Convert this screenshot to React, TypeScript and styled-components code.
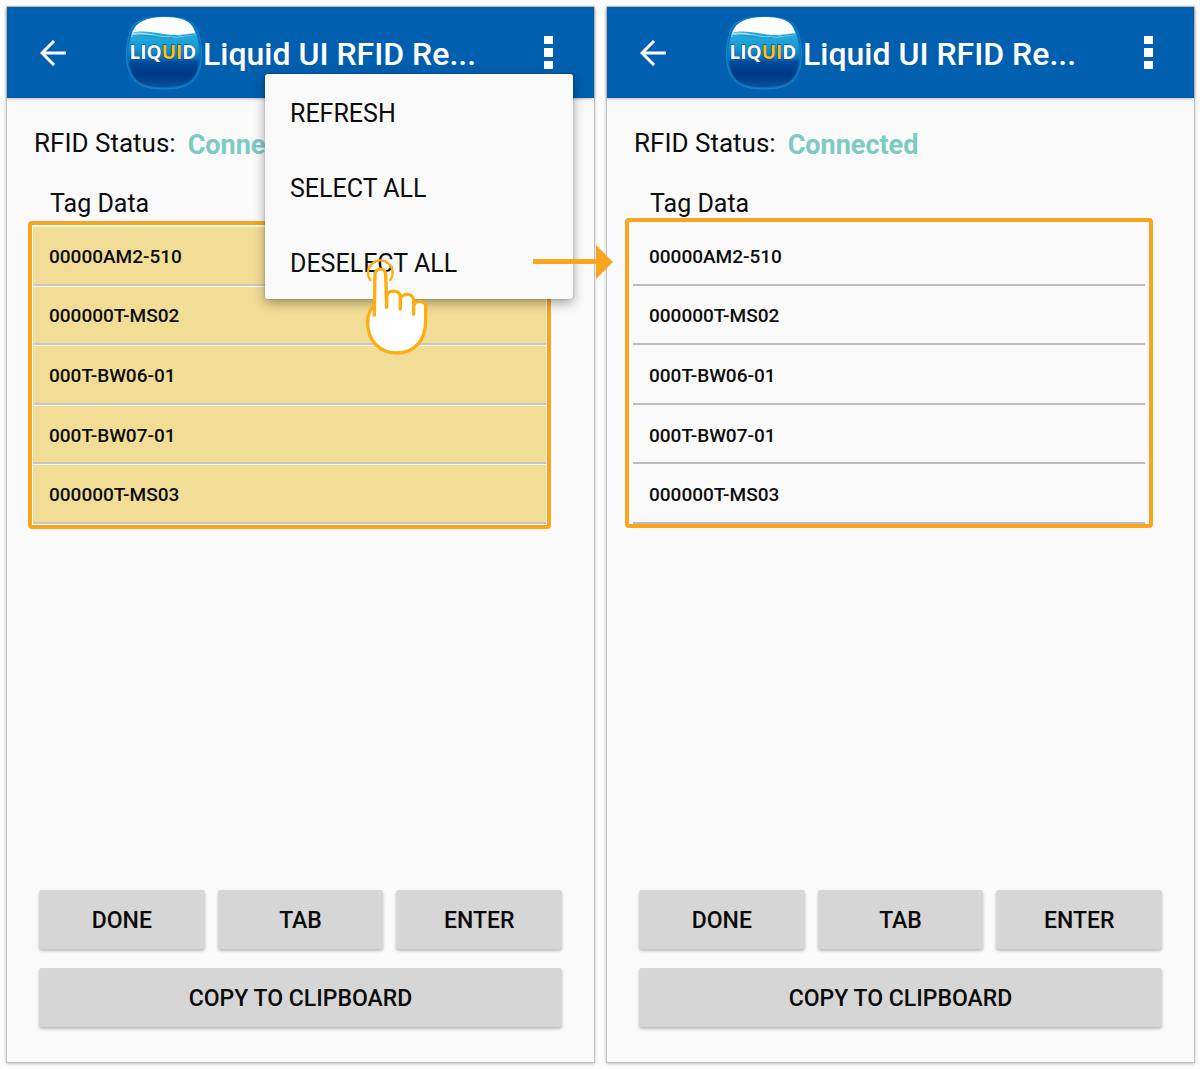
import React from "react";
import styled, { createGlobalStyle } from "styled-components";

const GlobalStyle = createGlobalStyle`
  *, *::before, *::after { box-sizing: border-box; }
  body {
    margin: 0;
    background: #fdfdfd;
    color: #0c0c0c;
    font-family: Roboto, "Liberation Sans", sans-serif;
  }
  button { font: inherit; color: inherit; border: 0; padding: 0; cursor: pointer; }
`;

const Page = styled.main`
  display: grid;
  grid-template-columns: 1fr 1fr;
  gap: 13px;
  min-height: 100vh;
  padding: 7px 6px 7px 7px;
`;

const Screen = styled.section<{ $raised?: boolean }>`
  position: relative;
  z-index: ${(p) => (p.$raised ? 1 : 0)};
  display: flex;
  flex-direction: column;
  min-width: 0;
  background: #fafafa;
  box-shadow: 0 0 0 1px #c4c4c4, 0 1px 4px rgba(0, 0, 0, 0.4);
`;

const AppBar = styled.header`
  display: flex;
  align-items: center;
  height: 91px;
  padding: 0 41px 0 33px;
  background: #005fae;
  color: #fff;
  box-shadow: 0 1px 3px rgba(0, 0, 0, 0.25);
`;

const IconButton = styled.button`
  display: flex;
  flex: none;
  background: none;
`;

const Logo = styled.svg`
  flex: none;
  width: 78px;
  height: 74px;
  margin-left: 59px;
`;

const Title = styled.h1`
  flex: 1;
  margin: 0;
  padding-top: 2px;
  overflow: hidden;
  white-space: nowrap;
  font-size: 32px;
  font-weight: 500;
  line-height: 40px;
`;

const Status = styled.p`
  display: flex;
  align-items: flex-start;
  gap: 12px;
  margin: 0;
  padding: 29px 27px 0;
  font-size: 26px;
  line-height: 32px;
`;

const StatusValue = styled.strong`
  padding-top: 2px;
  color: #7ccbc3;
  font-size: 27px;
  font-weight: 700;
`;

const ListTitle = styled.h2`
  margin: 0;
  padding: 29px 43px 0;
  font-size: 25px;
  font-weight: 400;
  line-height: 28px;
`;

const Frame = styled.div<{ $selected: boolean }>`
  margin: ${(p) => (p.$selected ? "3px 43px 0 21px" : "0 41px 0 18px")};
  padding: ${(p) => (p.$selected ? "1px" : "4px 4px 0")};
  border: 4px solid #faa51e;
  border-radius: 4px;
`;

const TagList = styled.ul`
  display: grid;
  grid-auto-rows: 1fr;
  min-height: 298px;
  margin: 0;
  padding: 0;
  list-style: none;
`;

const TagRow = styled.li<{ $selected: boolean }>`
  display: flex;
  border-bottom: 2px solid ${(p) => (p.$selected ? "#c6c6c8" : "#bcbcbc")};
  background: ${(p) => (p.$selected ? "#f2dd96" : "transparent")};
  box-shadow: ${(p) => (p.$selected ? "inset 0 1px #fffbe8" : "none")};
`;

const TagButton = styled.button`
  flex: 1;
  padding: 3px 16px 0;
  background: none;
  text-align: left;
  font-size: 19px;
  font-weight: 500;
`;

const Actions = styled.footer`
  display: grid;
  grid-template-columns: repeat(3, 1fr);
  gap: 19px 13px;
  margin-top: auto;
  padding: 0 32px 35px;
`;

const ActionButton = styled.button<{ $wide?: boolean }>`
  grid-column: ${(p) => (p.$wide ? "1 / -1" : "auto")};
  height: 59px;
  padding-top: 2px;
  border-radius: 3px;
  background: #d6d6d6;
  box-shadow: 0 2px 3px rgba(0, 0, 0, 0.25);
  font-size: 23px;
  font-weight: 500;
`;

const Menu = styled.div`
  position: absolute;
  top: 67px;
  right: 21px;
  width: 308px;
  border-radius: 3px;
  background: #fafafa;
  box-shadow: 0 4px 12px rgba(0, 0, 0, 0.35), 0 0 2px rgba(0, 0, 0, 0.3);
`;

const MenuItem = styled.button`
  display: block;
  width: 100%;
  height: 75px;
  padding: 3px 25px 0;
  background: none;
  text-align: left;
  font-size: 25px;
`;

const TapHand = styled.svg`
  position: absolute;
  left: 99px;
  top: 185px;
  width: 65px;
  height: 97px;
  pointer-events: none;
`;

const FlowArrow = styled.svg`
  position: absolute;
  left: 268px;
  top: 171px;
  width: 80px;
  height: 34px;
  pointer-events: none;
`;

function LiquidLogo({ id }: { id: string }) {
  return (
    <Logo viewBox="0 0 78 74" role="img" aria-label="Liquid UI">
      <defs>
        <linearGradient id={`${id}-water`} x1="0" y1="0" x2="0" y2="1">
          <stop offset="0.2" stopColor="#29afdf" />
          <stop offset="0.42" stopColor="#159bd4" />
          <stop offset="0.58" stopColor="#0873be" />
          <stop offset="0.64" stopColor="#004a9b" />
          <stop offset="0.82" stopColor="#003884" />
          <stop offset="1" stopColor="#07509e" />
        </linearGradient>
      </defs>
      <path
        d="M39 1C58 1 69 4 73 16C77 27 78 45 74 55C70 67 61 73 39 73C17 73 8 67 4 55C0 45 1 27 5 16C9 4 20 1 39 1Z"
        fill="#0871bc"
        stroke="#128acb"
      />
      <path
        d="M39 2C58 2 67 6 71 17C75 28 76 44 72 54C68 66 60 71 39 71C18 71 10 66 6 54C2 44 3 28 7 17C11 6 20 2 39 2Z"
        fill={`url(#${id}-water)`}
      />
      <path d="M39 1C59 1 68 6 70 17C62 18 52 20 39 18C26 16 16 14 7 17C11 6 21 1 39 1Z" fill="#fff" />
      <path d="M7 17C23 14 34 23 50 20C59 18 65 17 71 17L71 19C61 19 51 24 37 21C24 18 17 18 6 21Z" fill="#a6dcf2" />
      <path d="M7 20C21 16 33 25 49 21C58 19 65 19 71 18" fill="none" stroke="#1a8fc9" strokeWidth="1" />
      <text
        x="38"
        y="43"
        textAnchor="middle"
        fontFamily='"Open Sans", sans-serif'
        fontSize="19"
        fontWeight="700"
        fill="#fff"
        stroke="#0a3f86"
        strokeWidth="1"
        paintOrder="stroke"
      >
        LIQ<tspan fill="#fcbc10">UI</tspan>D
      </text>
    </Logo>
  );
}

const tags = ["00000AM2-510", "000000T-MS02", "000T-BW06-01", "000T-BW07-01", "000000T-MS03"];

interface ReaderProps {
  id: string;
  selected: boolean;
  children?: React.ReactNode;
}

function ReaderScreen({ id, selected, children }: ReaderProps) {
  return (
    <Screen $raised={Boolean(children)}>
      <AppBar>
        <IconButton aria-label="Back">
          <svg width="26" height="26" viewBox="0 0 26 26" fill="none" stroke="#fff" strokeWidth="3">
            <path d="M26 13H2M14 1L2 13L14 25" />
          </svg>
        </IconButton>
        <LiquidLogo id={id} />
        <Title>Liquid UI RFID Re...</Title>
        <IconButton aria-label="More options">
          <svg width="9" height="33" viewBox="0 0 9 33" fill="#fff">
            <path d="M0 0h9v8H0zM0 12h9v9H0zM0 25h9v8H0z" />
          </svg>
        </IconButton>
      </AppBar>
      <Status>
        RFID Status: <StatusValue>Connected</StatusValue>
      </Status>
      <ListTitle>Tag Data</ListTitle>
      <Frame $selected={selected}>
        <TagList>
          {tags.map((tag) => (
            <TagRow key={tag} $selected={selected}>
              <TagButton aria-pressed={selected}>{tag}</TagButton>
            </TagRow>
          ))}
        </TagList>
      </Frame>
      <Actions>
        <ActionButton>DONE</ActionButton>
        <ActionButton>TAB</ActionButton>
        <ActionButton>ENTER</ActionButton>
        <ActionButton $wide>COPY TO CLIPBOARD</ActionButton>
      </Actions>
      {children}
    </Screen>
  );
}

export default function App() {
  return (
    <>
      <GlobalStyle />
      <Page>
        <ReaderScreen id="before" selected>
          <Menu>
            <MenuItem>REFRESH</MenuItem>
            <MenuItem>SELECT ALL</MenuItem>
            <MenuItem>DESELECT ALL</MenuItem>
            <TapHand viewBox="72 57 195 291" aria-hidden="true">
              <g stroke="#fdac12" strokeWidth="10" strokeLinecap="round" strokeLinejoin="round">
                <path
                  d="M103 226L105 103C105 82 137 82 137 103L140 202V172C140 147 181 147 181 172V207V182C181 157 221 157 221 182V223V200C221 179 257 179 257 200V242C257 302 222 339 170 339C118 339 83 300 83 248C83 222 90 208 103 195"
                  fill="#fff"
                />
                <path d="M91 120A37 37 0 1 1 151 120" fill="none" strokeWidth="7" />
              </g>
            </TapHand>
            <FlowArrow viewBox="0 0 80 34" aria-hidden="true">
              <path d="M0 14H63V0L80 17L63 34V19H0Z" fill="#faa51e" />
            </FlowArrow>
          </Menu>
        </ReaderScreen>
        <ReaderScreen id="after" selected={false} />
      </Page>
    </>
  );
}
